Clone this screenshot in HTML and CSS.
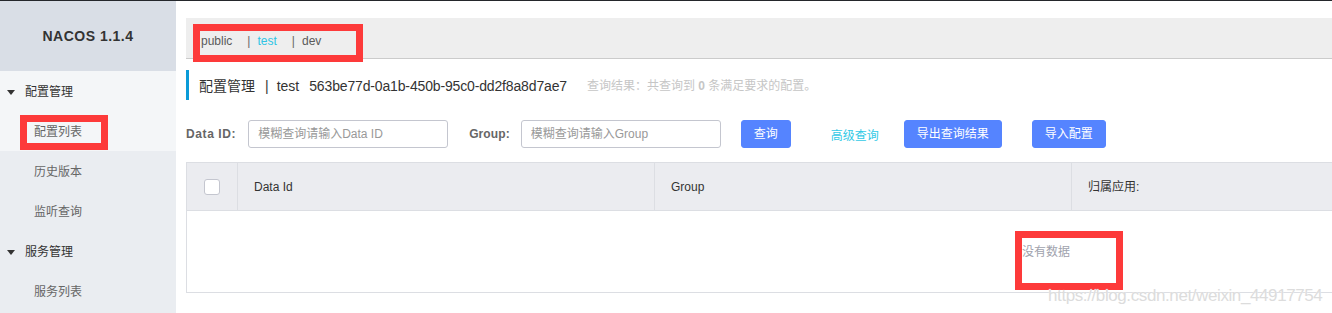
FILE: index.html
```html
<!DOCTYPE html>
<html lang="zh-CN">
<head>
<meta charset="utf-8">
<title>Nacos</title>
<link rel="stylesheet" href="styles.css">
</head>
<body>
<div class="app">
  <aside class="sidebar">
    <div class="brand">NACOS 1.1.4</div>
    <ul class="menu">
      <li class="group hl"><span class="caret"></span>配置管理</li>
      <li class="item hl">配置列表</li>
      <li class="item">历史版本</li>
      <li class="item">监听查询</li>
      <li class="group"><span class="caret"></span>服务管理</li>
      <li class="item">服务列表</li>
    </ul>
  </aside>
  <main class="main">
    <div class="ns-bar">
      <span class="ns">public</span><span class="ns-sep">|</span><span class="ns ns-active">test</span><span class="ns-sep">|</span><span class="ns">dev</span>
    </div>
    <div class="title">
      <span>配置管理</span><span class="title-sep">|</span><span>test</span><span class="uuid">563be77d-0a1b-450b-95c0-dd2f8a8d7ae7</span><span class="result">查询结果：共查询到 <b>0</b> 条满足要求的配置。</span>
    </div>
    <div class="search">
      <label class="label">Data ID:</label>
      <input class="input" type="text" placeholder="模糊查询请输入Data ID">
      <label class="label label-group">Group:</label>
      <input class="input" type="text" placeholder="模糊查询请输入Group">
      <button class="btn btn-query">查询</button>
      <a class="link">高级查询</a>
      <button class="btn btn-export">导出查询结果</button>
      <button class="btn btn-import">导入配置</button>
    </div>
    <div class="table">
      <div class="thead">
        <div class="cell cell-check"><span class="checkbox"></span></div>
        <div class="cell">Data Id</div>
        <div class="cell">Group</div>
        <div class="cell">归属应用:</div>
        <div class="cell cell-last"></div>
      </div>
      <div class="tbody">没有数据</div>
    </div>
  </main>
</div>
<div class="mark mark-ns"></div>
<div class="mark mark-menu"></div>
<div class="mark mark-empty"></div>
<div class="watermark">https://blog.csdn.net/weixin_44917754</div>
</body>
</html>
```
FILE: styles.css
```css
* {
  box-sizing: border-box;
}
html, body {
  margin: 0;
  padding: 0;
}
body {
  width: 1332px;
  height: 313px;
  overflow: hidden;
  border-top: 1px solid #24272b;
  font-family: "Liberation Sans", "Noto Sans CJK SC", sans-serif;
  font-size: 12px;
  color: #333;
  background: #fff;
  position: relative;
}
.app {
  display: flex;
  height: 312px;
}
.sidebar {
  width: 176px;
  flex: none;
  background: #eaedf1;
}
.brand {
  height: 70px;
  background: #d9dee6;
  display: flex;
  align-items: center;
  justify-content: center;
  font-weight: bold;
  font-size: 14px;
  letter-spacing: 0.5px;
  color: #333;
}
.menu {
  list-style: none;
  margin: 0;
  padding: 0;
}
.menu li {
  height: 40px;
  display: flex;
  align-items: center;
  line-height: 14px;
  padding-top: 2px;
}
.menu .hl {
  background: #f4f6f8;
}
.group {
  padding-left: 7px;
  color: #333;
}
.caret {
  width: 0;
  height: 0;
  border-left: 4.5px solid transparent;
  border-right: 4.5px solid transparent;
  border-top: 5px solid #333;
  margin-right: 10px;
}
.item {
  padding-left: 34px;
  color: #666;
}
.main {
  flex: 1;
  min-width: 0;
  overflow: hidden;
  padding: 17px 0 0 10px;
}
.ns-bar {
  height: 41px;
  background: #eee;
  border-bottom: 1px solid #cbcbcb;
  display: flex;
  align-items: center;
  padding: 5px 0 0 15px;
  line-height: 14px;
  color: #5a5a5a;
}
.ns-active {
  color: #2fc4e4;
}
.ns-sep {
  margin: 0 7px 0 15px;
  color: #666;
}
.title {
  margin-top: 11px;
  height: 30px;
  border-left: 3px solid #0b9bd8;
  padding-left: 10px;
  padding-top: 2px;
  display: flex;
  align-items: center;
  font-size: 14px;
  line-height: 16px;
  color: #333;
  white-space: nowrap;
}
.title-sep {
  margin: 0 8px 0 10px;
}
.uuid {
  margin-left: 10px;
  letter-spacing: -0.15px;
}
.result {
  margin-left: 20px;
  font-size: 12px;
  color: #c6c6c6;
}
.result b {
  font-weight: bold;
}
.search {
  margin-top: 20px;
  height: 28px;
  display: flex;
  align-items: center;
  white-space: nowrap;
}
.label {
  font-weight: bold;
  color: #666;
  letter-spacing: 0.6px;
  margin-right: 12px;
}
.label-group {
  margin-left: 21px;
  margin-right: 11px;
  letter-spacing: 0.1px;
}
.input {
  width: 200px;
  height: 28px;
  border: 1px solid #c4c6cf;
  border-radius: 3px;
  padding: 0 0 0 9px;
  font: inherit;
  font-size: 12px;
  color: #333;
  background: #fff;
  outline: none;
}
.input::placeholder {
  color: #999;
}
.btn {
  height: 28px;
  padding: 0 12px;
  border: 1px solid #5584ff;
  border-radius: 3px;
  background: #5584ff;
  color: #fff;
  font: inherit;
  font-size: 12px;
  line-height: 26px;
}
.btn-query {
  margin-left: 20px;
}
.link {
  margin-left: 40px;
  color: #33c9e6;
}
.btn-export {
  margin-left: 25px;
}
.btn-import {
  margin-left: 30px;
}
.table {
  margin-top: 14px;
  width: 1720px;
  border: 1px solid #dcdee3;
}
.thead {
  display: grid;
  grid-template-columns: 51px 417px 417px 417px 1fr;
  height: 48px;
  background: #ebecf0;
  border-bottom: 1px solid #dcdee3;
}
.cell {
  display: flex;
  align-items: center;
  padding-left: 16px;
  border-right: 1px solid #dcdee3;
  color: #333;
  line-height: 14px;
}
.cell-check {
  padding-left: 0;
  justify-content: center;
}
.cell-last {
  border-right: none;
}
.checkbox {
  width: 16px;
  height: 16px;
  border: 1px solid #c4c6cf;
  border-radius: 3px;
  background: #fff;
}
.tbody {
  height: 81px;
  display: flex;
  align-items: center;
  justify-content: center;
  color: #a0a2ad;
  line-height: 14px;
}
.mark {
  position: absolute;
  border: 7px solid #fd3a3a;
}
.mark-ns {
  left: 193px;
  top: 23px;
  width: 170px;
  height: 38px;
}
.mark-menu {
  left: 20px;
  top: 114px;
  width: 88px;
  height: 35px;
}
.mark-empty {
  left: 1015px;
  top: 230px;
  width: 108px;
  height: 59px;
}
.watermark {
  position: absolute;
  left: 1048px;
  top: 285px;
  font-family: "Liberation Sans", sans-serif;
  font-size: 17px;
  line-height: 20px;
  letter-spacing: -0.4px;
  color: #dcdcdc;
  text-shadow: 0 0 1px #fff;
  white-space: nowrap;
}
```
